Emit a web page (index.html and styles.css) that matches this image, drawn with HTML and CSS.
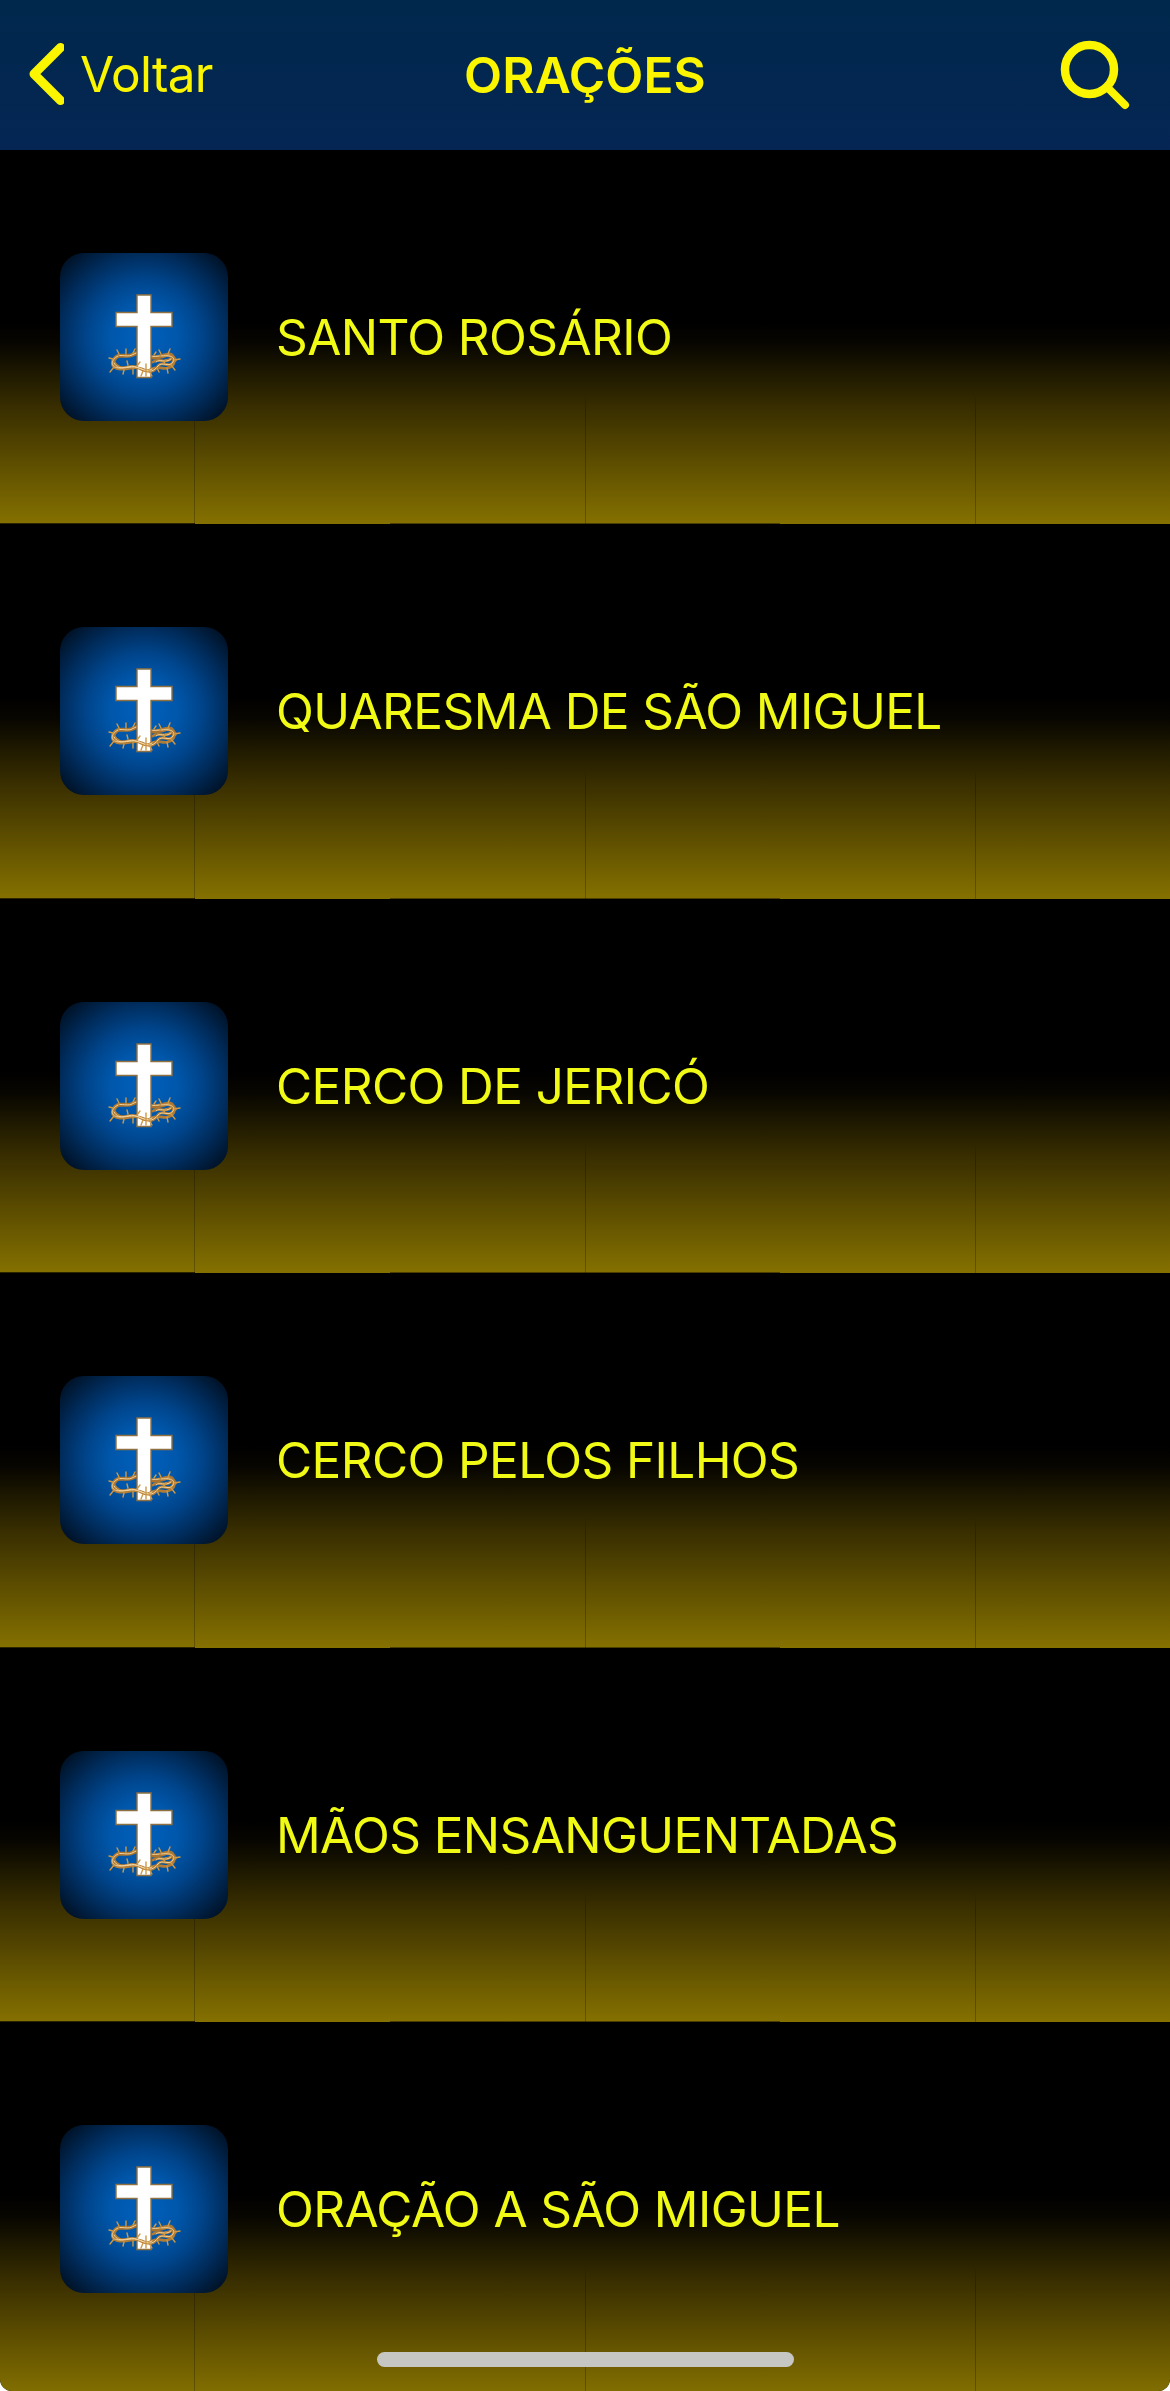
FILE: index.html
```
<!DOCTYPE html>
<html lang="pt-BR">
<head>
    <meta charset="UTF-8">
    <meta name="viewport" content="width=device-width, initial-scale=1.0">
    <title>Orações</title>
    <link rel="stylesheet" href="styles.css">
</head>
<body>
    <!-- cross with the crown of thorns, shared by all rows -->
    <svg class="defs" width="0" height="0">
        <symbol id="cross" viewBox="0 0 168 168">
            <!-- back of the crown -->
            <g fill="none" stroke-linecap="round">
                <path d="M54 107C58 99 66 105 72 102S82 98 86 102S100 104 106 102S112 103 115 107" stroke="#a87430" stroke-width="4"/>
                <path d="M54 106C58 99 66 105 72 102S82 97 86 101S100 103 106 102S112 105 115 108" stroke="#f3d39c" stroke-width="1"/>
            </g>
            <path d="M77 42h14v17.500h21v14h-21v51h-14v-51h-21v-14h21z" fill="#fff" stroke="#8f7040" stroke-width="1.400"/>
            <!-- front of the crown -->
            <g fill="none" stroke-linecap="round">
                <path d="M58 103C50 107 50 115 60 116S74 112 82 116S94 119 98 113S110 116 113 109S108 102 101 103M54 109C60 120 68 111 76 114S86 120 92 116S102 117 108 115S117 107 111 103M93 109C99 104 105 112 112 105" stroke="#b07c36" stroke-width="2.800"/>
                <path d="M58 103C50 107 50 115 60 115S74 112 82 116S94 118 98 113S110 115 113 109S108 102 101 103M54 110C60 120 68 111 76 114S86 119 92 116M96 109C100 105 105 111 111 106" stroke="#f3d39c" stroke-width="1"/>
                <path d="M59 101l-2-4M66 101v-5M73 100l2-4M53 106l-4-1M54 114l-4 5M64 117l-1 4M73 116v5M68 112l-1-4M77 113l3-4M86 123v-12M83 118l-2 5M89 118l3 5M97 115l2 4M107 115l1 5M111 112l4 5M114 107l6-1M108 101l2-5M101 101l-2-4M94 102l2-3M104 110l2-3" stroke="#cf9843" stroke-width="1.400"/>
            </g>
        </symbol>
    </svg>

    <header class="navbar">
        <a class="back" href="#">
            <svg viewBox="0 0 36 64" width="36" height="64">
                <path d="M32.500 4.500L6 31L32.500 57.500" fill="none" stroke="#fbf500" stroke-width="9" stroke-linecap="round" stroke-linejoin="round"/>
            </svg>
            <span>Voltar</span>
        </a>
        <h1>ORAÇÕES</h1>
        <a class="search" href="#">
            <svg viewBox="0 0 70 70" width="70" height="70">
                <circle cx="29.500" cy="29.500" r="24.500" fill="none" stroke="#fbf500" stroke-width="8.500"/>
                <path d="M47 47L65 65" stroke="#fbf500" stroke-width="8" stroke-linecap="round"/>
            </svg>
        </a>
    </header>

    <ul class="prayers">
        <li>
            <svg class="thumb"><use href="#cross"/></svg>
            <span>SANTO ROSÁRIO</span>
        </li>
        <li>
            <svg class="thumb"><use href="#cross"/></svg>
            <span>QUARESMA DE SÃO MIGUEL</span>
        </li>
        <li>
            <svg class="thumb"><use href="#cross"/></svg>
            <span>CERCO DE JERICÓ</span>
        </li>
        <li>
            <svg class="thumb"><use href="#cross"/></svg>
            <span>CERCO PELOS FILHOS</span>
        </li>
        <li>
            <svg class="thumb"><use href="#cross"/></svg>
            <span>MÃOS ENSANGUENTADAS</span>
        </li>
        <li>
            <svg class="thumb"><use href="#cross"/></svg>
            <span>ORAÇÃO A SÃO MIGUEL</span>
        </li>
    </ul>

    <div class="home-indicator"></div>
</body>
</html>
```
FILE: styles.css
```
* {
    box-sizing: border-box;
}

html {
    background-color: #fff;
}

body {
    position: relative;
    width: 1170px;
    height: 2391px;
    margin: 0;
    overflow: hidden;
    background-color: #000;
    border-radius: 0 0 12px 12px;
    font-family: Inter, "Liberation Sans", sans-serif;
    font-size: 49.5px;
    color: #f0fa14;
}

.defs {
    display: block;
}

.navbar {
    display: grid;
    grid-template-columns: 1fr auto 1fr;
    align-items: center;
    height: 149.5px;
    padding: 0 28px;
    background: linear-gradient(#00284c, #052654);
    color: #fbf500;
}

.navbar h1 {
    margin: 0;
    font-size: 49.5px;
    font-weight: 600;
    letter-spacing: 0.1px;
}

.back {
    display: flex;
    align-items: center;
    gap: 16px;
    color: inherit;
    text-decoration: none;
}

.back span {
    padding-bottom: 2px;
    letter-spacing: -0.7px;
}

.search {
    display: flex;
    justify-content: flex-end;
    padding-right: 12px;
}

.prayers {
    margin: 0;
    padding: 0;
    list-style: none;
}

/* the row background shows thin seams every 390px */
.prayers li {
    display: flex;
    align-items: center;
    gap: 48px;
    height: 374.5px;
    padding-left: 60px;
    background:
        linear-gradient(rgba(0, 0, 0, 0) 65%, rgba(0, 0, 0, 0.25) 70%) 194px 0 / 1px 100% no-repeat,
        linear-gradient(rgba(0, 0, 0, 0) 65%, rgba(0, 0, 0, 0.25) 70%) 585px 0 / 1px 100% no-repeat,
        linear-gradient(rgba(0, 0, 0, 0) 65%, rgba(0, 0, 0, 0.25) 70%) 975px 0 / 1px 100% no-repeat,
        linear-gradient(#2a2400, #2a2400) 0 100% / 195px 1px no-repeat,
        linear-gradient(#4a3e00, #4a3e00) 390px 100% / 390px 1px no-repeat,
        linear-gradient(#000 46%, #080600 52%, #1c1700 59%, #362c00 68%, #857100 100%);
}

.prayers span {
    letter-spacing: -0.6px;
    white-space: nowrap;
}

.thumb {
    width: 168px;
    height: 168px;
    border-radius: 24px;
    background: radial-gradient(circle, #0060bc 0%, #0057ab 28%, #00458c 48%, #002c5c 70%, #001227 92%);
}

.home-indicator {
    position: absolute;
    left: 377px;
    bottom: 24px;
    width: 417px;
    height: 15px;
    border-radius: 8px;
    background-color: #c6c6c3;
}
```
